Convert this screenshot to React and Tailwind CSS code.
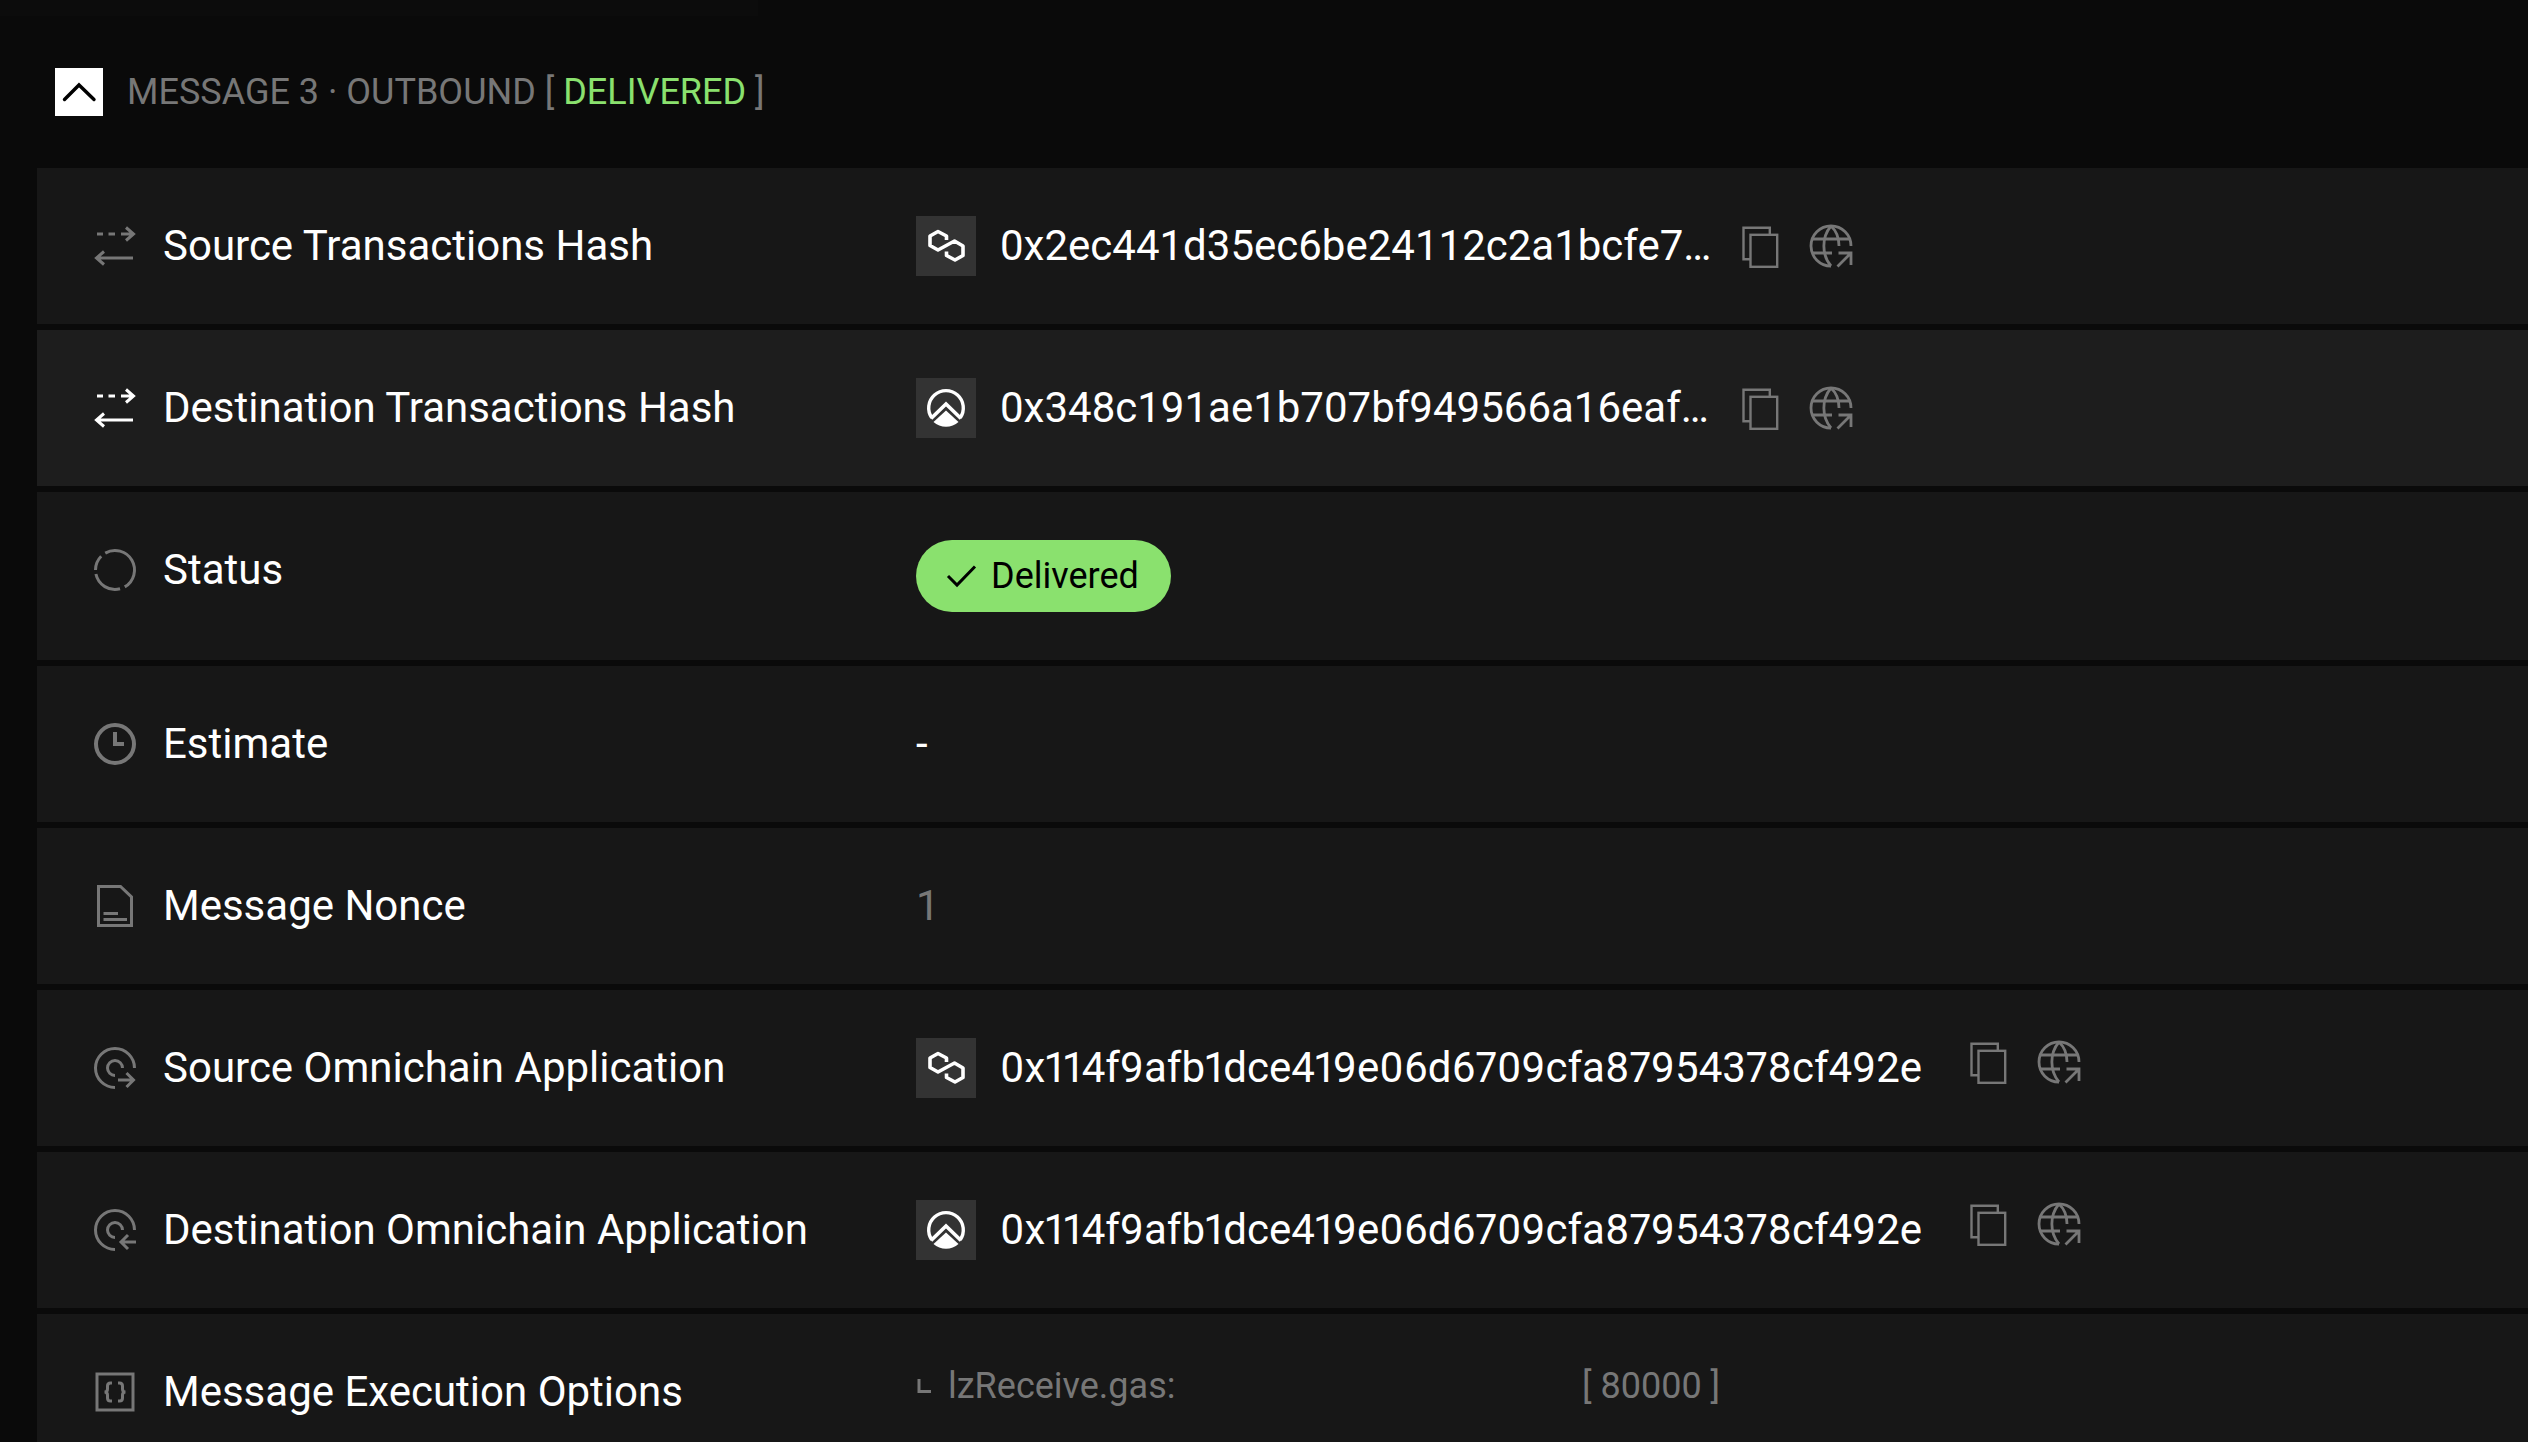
import React, { useState } from 'react';

const SwapIcon = () => (
  <svg viewBox="0 0 48 48" className="w-12 h-12" fill="none" stroke="currentColor" strokeWidth="3">
    <path d="M6 12h6M17.5 12h6.5M30 12h12M35 5.5l7.5 6.5-7.5 6.5" />
    <path d="M42 36H6M13 29.5L5.5 36l7.5 6.5" />
  </svg>
);

const StatusIcon = () => (
  <svg viewBox="0 0 48 48" className="w-12 h-12" fill="none" stroke="currentColor" strokeWidth="3">
    <path d="M14.25 7.1A19.5 19.5 0 0 1 33.75 40.9" />
    <path d="M29.05 42.8A19.5 19.5 0 0 1 4.9 28.05" />
    <path d="M4.5 24A19.5 19.5 0 0 1 10.2 10.2" />
  </svg>
);

const ClockIcon = () => (
  <svg viewBox="0 0 48 48" className="w-12 h-12" fill="none" stroke="currentColor" strokeWidth="4">
    <circle cx="24" cy="24" r="19" />
    <path d="M24 12v12h9" />
  </svg>
);

const NoteIcon = () => (
  <svg viewBox="0 0 48 48" className="w-12 h-12" fill="none" stroke="currentColor" strokeWidth="3">
    <path d="M7.5 4.5H29.5L40.5 15V43.5H7.5Z" />
    <path d="M12.5 31.5H27M12.5 37.5H36" />
  </svg>
);

const AppOutIcon = () => (
  <svg viewBox="0 0 48 48" className="w-12 h-12" fill="none" stroke="currentColor" strokeWidth="3">
    <path d="M43.5 24A19.5 19.5 0 1 0 24 43.5" />
    <path d="M31.5 24A7.5 7.5 0 1 0 24 31.5" />
    <path d="M27 36H43M35.5 29l7 7-7 7" />
  </svg>
);

const AppInIcon = () => (
  <svg viewBox="0 0 48 48" className="w-12 h-12" fill="none" stroke="currentColor" strokeWidth="3">
    <path d="M43.5 24A19.5 19.5 0 1 0 24 43.5" />
    <path d="M31.5 24A7.5 7.5 0 1 0 24 31.5" />
    <path d="M45 36H29.5M37 29l-7 7 7 7" />
  </svg>
);

const OptionsIcon = () => (
  <svg viewBox="0 0 48 48" className="w-12 h-12" fill="none" stroke="currentColor" strokeWidth="3">
    <rect x="6" y="6" width="36" height="36" />
    <path d="M21 15h-1.5q-3 0-3 3v3q0 3-3 3 3 0 3 3v3q0 3 3 3H21" />
    <path d="M27 15h1.5q3 0 3 3v3q0 3 3 3-3 0-3 3v3q0 3-3 3H27" />
  </svg>
);

const CopyIcon = () => (
  <svg viewBox="0 0 48 48" className="w-12 h-12" fill="none" stroke="currentColor" strokeWidth="2.4">
    <path d="M14.5 37.2H7.5V5.8H33.8V12.8" />
    <rect x="14.5" y="12.8" width="26.7" height="32" />
  </svg>
);

const GlobeIcon = () => (
  <svg viewBox="0 0 48 48" className="w-12 h-12" fill="none" stroke="currentColor" strokeWidth="2.8">
    <path d="M44 24A20 20 0 1 0 24 44" />
    <path d="M24 4C14.5 15 14.5 33 24 44M24 4C29.5 9 32 16 32 24" />
    <path d="M5.5 17H42.5M5.5 31H25M31.5 31H44V43M44 31L30.5 44.5" />
  </svg>
);

const PolygonLogo = () => (
  <svg viewBox="0 0 60 60" className="w-[60px] h-[60px]" fill="none" stroke="currentColor" strokeWidth="3.6" strokeLinejoin="round">
    <path d="M30.5 24V20L22 15.5 14 20V29.5L22 34 38.5 25 47 30V39.5L39 44 30.5 39.5V35.5" />
  </svg>
);

const PeakLogo = () => (
  <svg viewBox="0 0 60 60" className="w-[60px] h-[60px]" fill="none" stroke="currentColor">
    <path d="M15.8 39.8A17.3 17.3 0 1 1 44.2 39.8" strokeWidth="3.4" />
    <path d="M15 40.5L30 26 45 40.5" strokeWidth="3.6" />
    <path d="M30 32.5L42.5 44A18.8 18.8 0 0 1 17.5 44Z" fill="currentColor" stroke="none" />
  </svg>
);

const Actions = () => (
  <div className="flex gap-[23px] text-[#777777]">
    <button type="button" aria-label="Copy">
      <CopyIcon />
    </button>
    <a href="#explorer" aria-label="Open in explorer">
      <GlobeIcon />
    </a>
  </div>
);

const ChainBadge = ({ children }) => (
  <span className="shrink-0 mr-6 bg-[#333333] text-white">{children}</span>
);

const TxHash = ({ logo, hash }) => (
  <div className="flex items-center">
    <ChainBadge>{logo}</ChainBadge>
    <a href="#tx" className="w-[736px]">{hash}</a>
    <Actions />
  </div>
);

const AppAddress = ({ logo, address }) => (
  <div className="flex items-start">
    <ChainBadge>{logo}</ChainBadge>
    <a href="#address" className="w-[964px] proportional-nums">{address}</a>
    <Actions />
  </div>
);

const rows = [
  {
    label: 'Source Transactions Hash',
    icon: <SwapIcon />,
    value: <TxHash logo={<PolygonLogo />} hash="0x2ec441d35ec6be24112c2a1bcfe7…" />,
  },
  {
    label: 'Destination Transactions Hash',
    icon: <SwapIcon />,
    active: true,
    value: <TxHash logo={<PeakLogo />} hash="0x348c191ae1b707bf949566a16eaf…" />,
  },
  {
    label: 'Status',
    icon: <StatusIcon />,
    value: (
      <span className="inline-flex items-center gap-3 h-[72px] pl-[27px] pr-8 rounded-full bg-[#8ae16e] text-black text-[36px] leading-[48px]">
        <svg viewBox="0 0 36 36" className="w-9 h-9" fill="none" stroke="currentColor" strokeWidth="3">
          <path d="M5 18l9 9L32 8.5" />
        </svg>
        Delivered
      </span>
    ),
  },
  { label: 'Estimate', icon: <ClockIcon />, value: '-' },
  { label: 'Message Nonce', icon: <NoteIcon />, value: <span className="text-[#777777]">1</span> },
  {
    label: 'Source Omnichain Application',
    icon: <AppOutIcon />,
    value: <AppAddress logo={<PolygonLogo />} address="0x114f9afb1dce419e06d6709cfa87954378cf492e" />,
  },
  {
    label: 'Destination Omnichain Application',
    icon: <AppInIcon />,
    value: <AppAddress logo={<PeakLogo />} address="0x114f9afb1dce419e06d6709cfa87954378cf492e" />,
  },
  {
    label: 'Message Execution Options',
    icon: <OptionsIcon />,
    value: (
      <div className="flex items-center text-[36px] leading-[48px] text-[#777777]">
        <svg viewBox="0 0 16 16" className="w-4 h-4 mr-4" fill="none" stroke="currentColor" strokeWidth="3">
          <path d="M3 1v12.5h12" />
        </svg>
        <span className="w-[634px]">lzReceive.gas:</span>
        <span>[ 80000 ]</span>
      </div>
    ),
  },
];

const Row = ({ label, icon, value, active }) => (
  <div className={`flex items-start px-[54px] py-12 ${active ? 'bg-[#1d1d1d]' : 'bg-[#171717]'}`}>
    <dt className="w-[825px] shrink-0 flex items-center gap-6">
      <span className={active ? 'text-white' : 'text-[#777777]'}>{icon}</span>
      {label}
    </dt>
    <dd className="flex-1 flex">{value}</dd>
  </div>
);

export default function App() {
  const [open, setOpen] = useState(true);

  return (
    <main className="h-screen overflow-hidden bg-[#0a0a0a] text-white font-['Roboto',sans-serif] text-[42px] leading-[60px]">
      {/* Lower edge of the panel above */}
      <div className="h-4 w-[30%] bg-[#0c0c0c]" />

      <section className="pl-[37px]">
        <header className="flex items-center gap-6 pl-[18px] py-[52px]">
          <button
            type="button"
            aria-label="Toggle message"
            onClick={() => setOpen(!open)}
            className="w-12 h-12 bg-white text-black"
          >
            <svg viewBox="0 0 48 48" className="w-12 h-12" fill="none" stroke="currentColor" strokeWidth="3.4" strokeLinecap="round">
              <path d="M9.5 31.5L24 17l15 14.5" />
            </svg>
          </button>
          <h2 className="text-[36px] leading-[48px] text-[#777777]">
            MESSAGE 3 · OUTBOUND [ <span className="text-[#8ae16e]">DELIVERED</span> ]
          </h2>
        </header>

        {open && (
          <dl className="flex flex-col gap-[6px]">
            {rows.map((row) => (
              <Row key={row.label} {...row} />
            ))}
          </dl>
        )}
      </section>
    </main>
  );
}
